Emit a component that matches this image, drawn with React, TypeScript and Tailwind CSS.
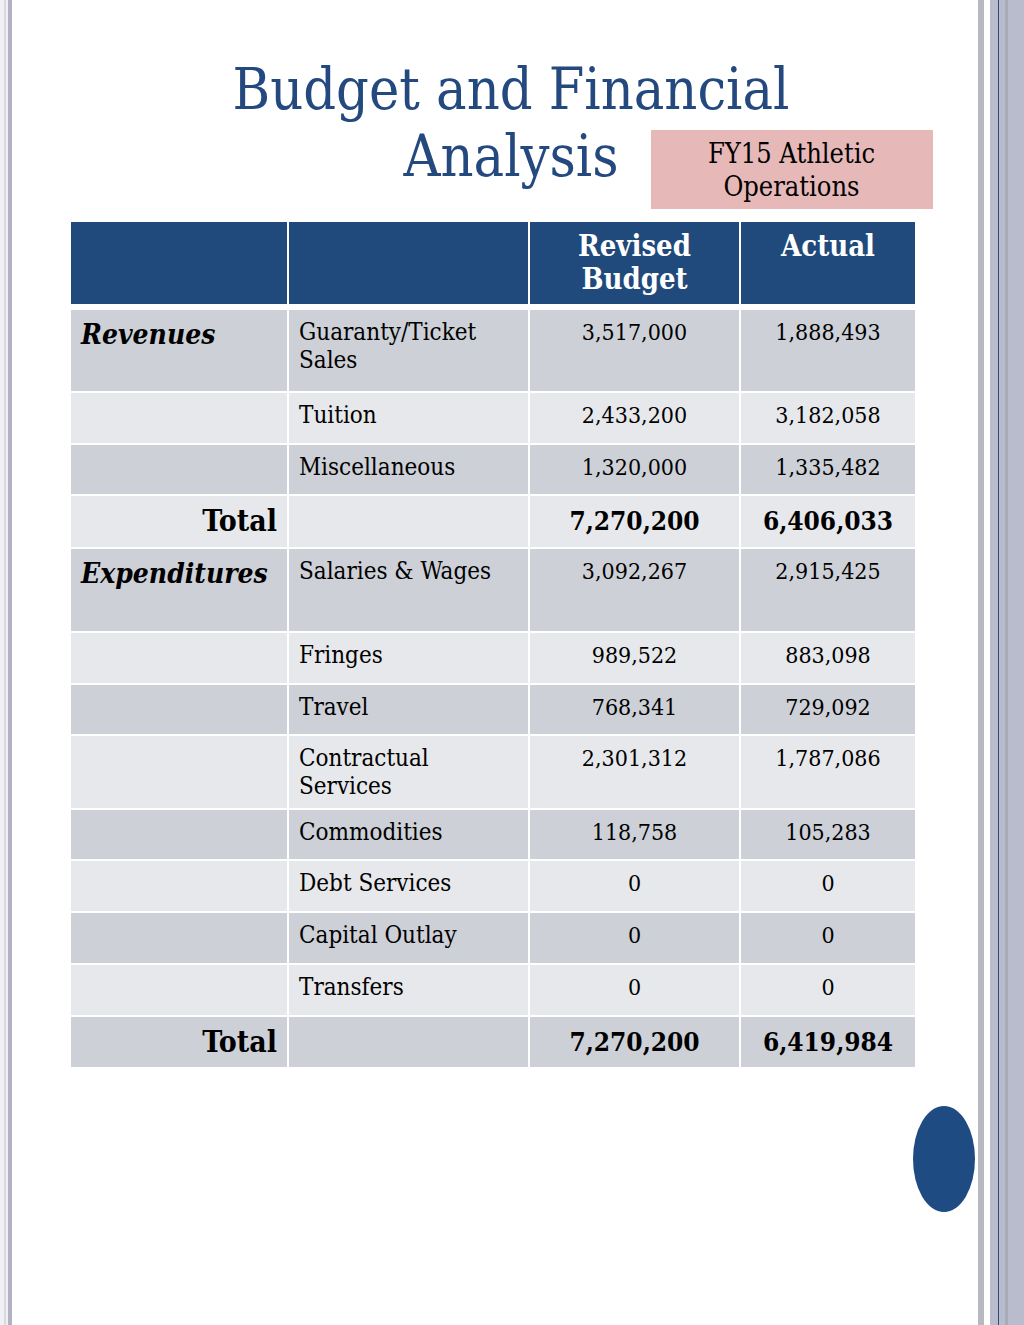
import React from 'react'

type Row = {
  label?: string
  item: string
  budget: string
  actual: string
  h: string
  dark: boolean
  total?: boolean
}

const rows: Row[] = [
  { label: 'Revenues', item: 'Guaranty/Ticket Sales', budget: '3,517,000', actual: '1,888,493', h: 'h-[81px]', dark: true },
  { item: 'Tuition', budget: '2,433,200', actual: '3,182,058', h: 'h-[50px]', dark: false },
  { item: 'Miscellaneous', budget: '1,320,000', actual: '1,335,482', h: 'h-[49px]', dark: true },
  { label: 'Total', item: '', budget: '7,270,200', actual: '6,406,033', h: 'h-[51px]', dark: false, total: true },
  { label: 'Expenditures', item: 'Salaries & Wages', budget: '3,092,267', actual: '2,915,425', h: 'h-[82px]', dark: true },
  { item: 'Fringes', budget: '989,522', actual: '883,098', h: 'h-[50px]', dark: false },
  { item: 'Travel', budget: '768,341', actual: '729,092', h: 'h-[49px]', dark: true },
  { item: 'Contractual Services', budget: '2,301,312', actual: '1,787,086', h: 'h-[72px]', dark: false },
  { item: 'Commodities', budget: '118,758', actual: '105,283', h: 'h-[49px]', dark: true },
  { item: 'Debt Services', budget: '0', actual: '0', h: 'h-[50px]', dark: false },
  { item: 'Capital Outlay', budget: '0', actual: '0', h: 'h-[50px]', dark: true },
  { item: 'Transfers', budget: '0', actual: '0', h: 'h-[50px]', dark: false },
  { label: 'Total', item: '', budget: '7,270,200', actual: '6,419,984', h: 'h-[50px]', dark: true, total: true },
]

function Cell({ row, children, className }: { row: Row; children?: React.ReactNode; className?: string }) {
  return (
    <div className={`${row.h} ${row.dark ? 'bg-[#cdd0d7]' : 'bg-[#e7e8eb]'} ${className ?? ''}`}>
      {children}
    </div>
  )
}

export default function App() {
  return (
    <div className="flex h-[1325px] w-[1024px] bg-white font-['DejaVu_Serif_Condensed','DejaVu_Serif',serif] text-black">
      {/* left edge stripes */}
      <div className="w-[4px] bg-[#f1f1f5]" />
      <div className="w-[2px] bg-[#d9d9e3]" />
      <div className="w-[2px] bg-[#eeeef3]" />
      <div className="w-[4px] bg-[#b2b2c4]" />

      <main className="flex flex-1 flex-col">
        {/* title */}
        <div className="flex flex-col items-center pl-[32px] pt-[56px] text-[57px] leading-[67px] text-[#24497f]">
          <div>Budget and Financial</div>
          <div className="grid w-full grid-cols-[1fr_auto_1fr]">
            <div />
            <div>Analysis</div>
            <div className="flex pl-[32px] pt-[7px]">
              <div className="flex h-[79px] w-[282px] flex-col items-center justify-center bg-[#e6b9b8] text-[27px] leading-[33px] text-black">
                <span>FY15 Athletic</span>
                <span>Operations</span>
              </div>
            </div>
          </div>
        </div>

        {/* table */}
        <div className="ml-[59px] mt-[13px] grid w-[844px] grid-cols-[216px_239px_209px_174px] gap-x-[2px] gap-y-[2px]">
          <div className="h-[82px] bg-[#204a7b]" />
          <div className="h-[82px] bg-[#204a7b]" />
          <div className="h-[82px] bg-[#204a7b] pt-[8px] text-center text-[29px] font-bold leading-[33px] text-white">
            Revised
            <br />
            Budget
          </div>
          <div className="h-[82px] bg-[#204a7b] pt-[8px] text-center text-[29px] font-bold leading-[33px] text-white">
            Actual
          </div>
          <div className="col-span-4 h-[2px]" />

          {rows.map((r, i) =>
            r.total ? (
              <React.Fragment key={i}>
                <Cell row={r} className="pr-[10px] pt-[8px] text-right text-[30px] font-bold leading-[34px]">
                  {r.label}
                </Cell>
                <Cell row={r} />
                <Cell row={r} className="pt-[8px] text-center text-[26px] font-bold leading-[34px]">
                  {r.budget}
                </Cell>
                <Cell row={r} className="pt-[8px] text-center text-[26px] font-bold leading-[34px]">
                  {r.actual}
                </Cell>
              </React.Fragment>
            ) : (
              <React.Fragment key={i}>
                <Cell row={r} className="pl-[10px] pt-[8px] text-[28px] font-bold italic leading-[34px]">
                  {r.label}
                </Cell>
                <Cell row={r} className="pl-[10px] pr-[30px] pt-[8px] text-[24px] leading-[28px]">
                  {r.item}
                </Cell>
                <Cell row={r} className="pt-[8px] text-center text-[23px] leading-[28px]">
                  {r.budget}
                </Cell>
                <Cell row={r} className="pt-[8px] text-center text-[23px] leading-[28px]">
                  {r.actual}
                </Cell>
              </React.Fragment>
            )
          )}
        </div>

        {/* slide marker */}
        <div className="mt-[39px] flex justify-end pr-[3px]">
          <div className="h-[106px] w-[62px] rounded-[50%] bg-[#1f4b83]" />
        </div>
      </main>

      {/* right edge stripes */}
      <div className="w-[6px] bg-[#b7b8c0]" />
      <div className="w-[6px] bg-white" />
      <div className="w-[8px] bg-[#b8bccc]" />
      <div className="w-[1px] bg-[#2c4c7c]" />
      <div className="w-[6px] bg-[#b8bccc]" />
      <div className="w-[3px] bg-[#a9abb9]" />
      <div className="w-[16px] bg-[#b9bccc]" />
    </div>
  )
}
